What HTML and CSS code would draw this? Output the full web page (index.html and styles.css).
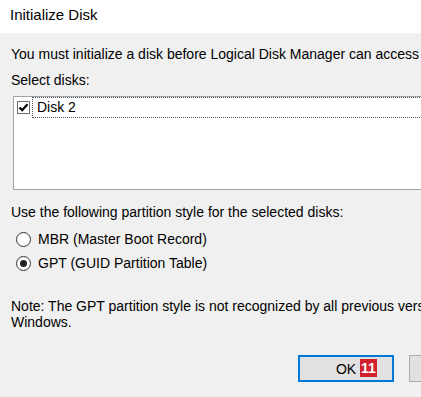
FILE: index.html
```html
<!DOCTYPE html>
<html lang="en">
<head>
    <meta charset="UTF-8">
    <meta name="viewport" content="width=device-width, initial-scale=1.0">
    <title>Initialize Disk</title>
    <link rel="stylesheet" href="styles.css">
</head>
<body>
    <div class="dialog">
        <div class="title-bar">Initialize Disk</div>
        <div class="content">
            <p class="intro">You must initialize a disk before Logical Disk Manager can access it.</p>
            <p class="label">Select disks:</p>
            <div class="disk-list">
                <div class="disk-item">
                    <span class="checkbox">
                        <svg width="11" height="11" viewBox="0 0 11 11">
                            <path d="M1.5 5.5 L4.2 8.2 L9.5 2.2" fill="none" stroke="#000" stroke-width="2.2"/>
                        </svg>
                    </span>
                    <span class="disk-name">Disk 2</span>
                </div>
            </div>
            <p class="label style-label">Use the following partition style for the selected disks:</p>
            <div class="radio-group">
                <div class="radio-row">
                    <span class="radio"></span>
                    <span>MBR (Master Boot Record)</span>
                </div>
                <div class="radio-row">
                    <span class="radio checked"></span>
                    <span>GPT (GUID Partition Table)</span>
                </div>
            </div>
            <p class="note">Note: The GPT partition style is not recognized by all previous versions of<br>Windows.</p>
            <div class="buttons">
                <button class="btn btn-default">OK<span class="badge">11</span></button>
                <button class="btn">Cancel</button>
            </div>
        </div>
    </div>
</body>
</html>
```

FILE: styles.css
```css
body {
    margin: 0;
    padding: 0;
    overflow: hidden;
    font-family: "Liberation Sans", Arial, sans-serif;
    color: #000;
    background-color: #f0f0f0;
}
.dialog {
    width: 520px;
    height: 397px;
    background-color: #f0f0f0;
}
.title-bar {
    height: 28px;
    padding: 5px 0 0 10px;
    line-height: 20px;
    font-size: 15px;
    background-color: #fff;
}
.content {
    padding: 13px 11px 0 11px;
    font-size: 14px;
    line-height: 16px;
}
p {
    margin: 0;
}
.intro {
    white-space: nowrap;
}
.label {
    margin-top: 10px;
}
.disk-list {
    margin: 8px 0 0 2px;
    height: 92px;
    border: 1px solid #a0a4aa;
    background-color: #fff;
}
.disk-item {
    display: flex;
    align-items: center;
    height: 21px;
}
.checkbox {
    display: flex;
    align-items: center;
    justify-content: center;
    width: 11px;
    height: 11px;
    margin-left: 3px;
    border: 1px solid #707070;
    background-color: #fff;
}
.disk-name {
    flex: 1;
    height: 19px;
    line-height: 19px;
    margin-left: 2px;
    padding-left: 4px;
    border: 1px dotted #555;
    border-right: none;
}
.style-label {
    margin-top: 14px;
}
.radio-group {
    display: flex;
    flex-direction: column;
    gap: 8px;
    margin-top: 11px;
}
.radio-row {
    display: flex;
    align-items: center;
    gap: 7px;
    padding-left: 5px;
}
.radio {
    box-sizing: border-box;
    width: 15px;
    height: 15px;
    border: 1px solid #333;
    border-radius: 50%;
    background-color: #fff;
    display: flex;
    align-items: center;
    justify-content: center;
}
.radio.checked::after {
    content: "";
    width: 7px;
    height: 7px;
    border-radius: 50%;
    background-color: #222;
}
.note {
    margin-top: 27px;
    white-space: nowrap;
}
.buttons {
    display: flex;
    gap: 15px;
    margin: 25px 0 0 287px;
}
.btn {
    position: relative;
    box-sizing: border-box;
    width: 96px;
    height: 27px;
    padding: 0;
    font-family: "Liberation Sans", Arial, sans-serif;
    font-size: 14px;
    color: #000;
    background-color: #e1e1e1;
    border: 1px solid #adadad;
}
.btn-default {
    border: 2px solid #0078d7;
}
.badge {
    position: absolute;
    left: 60px;
    top: 2px;
    width: 17px;
    height: 18px;
    line-height: 18px;
    font-size: 14px;
    font-weight: bold;
    color: #fff;
    text-align: center;
    background-color: #d2202f;
}
```
